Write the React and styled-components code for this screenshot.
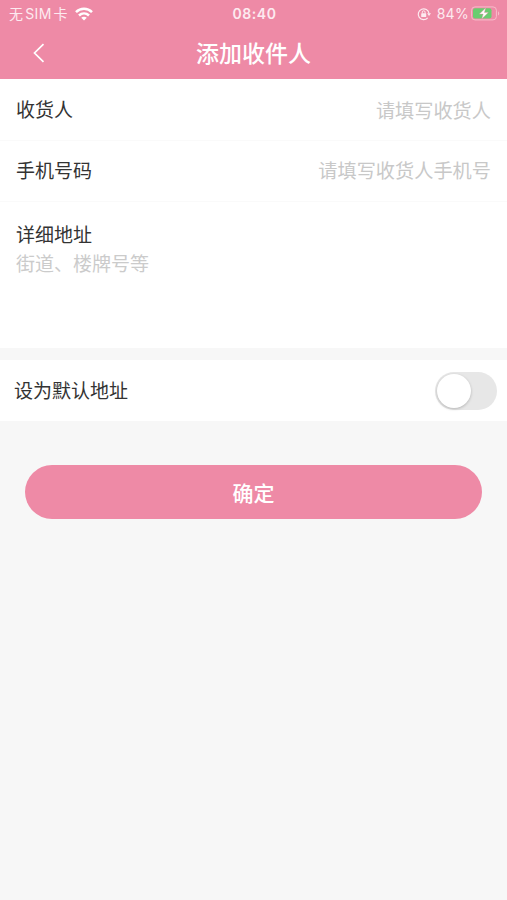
import React, { useState } from 'react'
import styled, { createGlobalStyle } from 'styled-components'

const GlobalStyle = createGlobalStyle`
  * {
    box-sizing: border-box;
  }

  body {
    margin: 0;
    background-color: #f7f7f7;
    color: #333;
    font-family: Inter, 'Noto Sans CJK SC', sans-serif;
  }
`

const Page = styled.div`
  min-height: 900px;
  background-color: #f7f7f7;
`

const Header = styled.header`
  height: 79px;
  color: #fff;
  background-color: #ee8aa6;
`

const StatusBar = styled.div`
  display: grid;
  grid-template-columns: 1fr auto 1fr;
  align-items: center;
  height: 27px;
  padding: 0 7px 0 9px;
  font-size: 14px;
  line-height: 20px;
  color: #fdeaf0;
`

const StatusGroup = styled.div`
  display: flex;
  align-items: center;
  justify-content: ${props => (props.$end ? 'flex-end' : 'flex-start')};
`

const Carrier = styled.span`
  display: flex;
  gap: 2px;
  margin-right: 7px;
  letter-spacing: 0.3px;
`

const Clock = styled.span`
  font-size: 14px;
  font-weight: 600;
  letter-spacing: 0.6px;
`

const Percent = styled.span`
  margin: 0 2px 0 6px;
  font-size: 14px;
  letter-spacing: 0.3px;
`

const NavBar = styled.div`
  display: grid;
  grid-template-columns: 78px 1fr 78px;
  align-items: center;
  height: 52px;
`

const BackButton = styled.button`
  display: flex;
  justify-content: center;
  padding: 0;
  border: 0;
  color: inherit;
  background: none;
`

const Title = styled.h1`
  margin: 0;
  padding-top: 1px;
  font-size: 23px;
  font-weight: 500;
  line-height: 34px;
  text-align: center;
`

const Field = styled.label`
  display: flex;
  align-items: center;
  height: ${props => props.$height}px;
  padding: ${props => props.$offset || 0}px 16px 0;
  border-bottom: 1px solid #fafafa;
  background-color: #fff;
  font-size: 19.2px;
`

const Label = styled.span`
  flex: none;
  font-size: 19px;
  line-height: 29px;
`

const Input = styled.input`
  flex: 1;
  min-width: 0;
  height: 30px;
  padding: 0;
  border: 0;
  outline: 0;
  background: none;
  font: inherit;
  text-align: right;

  &::placeholder {
    color: #c8c8c8;
  }
`

const AddressField = styled.label`
  display: block;
  height: 146px;
  padding: 19px 16px 0;
  background-color: #fff;
`

const TextArea = styled.textarea`
  display: block;
  width: 100%;
  height: 80px;
  padding: 0;
  border: 0;
  outline: 0;
  resize: none;
  background: none;
  font-family: inherit;
  font-size: 19px;
  line-height: 29px;

  &::placeholder {
    color: #cbcbcb;
  }
`

const DefaultRow = styled.div`
  display: flex;
  align-items: center;
  justify-content: space-between;
  height: 61px;
  margin-top: 12px;
  padding: 1px 10px 0 14px;
  background-color: #fff;
`

const Switch = styled.button`
  display: flex;
  align-items: center;
  justify-content: ${props => (props.$on ? 'flex-end' : 'flex-start')};
  width: 62px;
  height: 38px;
  padding: 0 2px;
  border: 0;
  border-radius: 19px;
  background-color: ${props => (props.$on ? '#ee8aa6' : '#e7e7e7')};
`

const Knob = styled.span`
  width: 34px;
  height: 34px;
  border-radius: 50%;
  background-color: #fff;
  box-shadow: 0 1px 3px rgba(0, 0, 0, 0.22);
`

const Submit = styled.button`
  display: block;
  width: 457px;
  height: 54px;
  margin: 44px auto 0;
  padding: 0 0 1px;
  border: 0;
  border-radius: 27px;
  color: #fff;
  background-color: #ee8aa6;
  font-family: inherit;
  font-size: 21px;
  font-weight: 500;
`

const WifiIcon = () => (
  <svg width="18" height="14" viewBox="0 0 18 14" fill="none">
    <g stroke="#fff" strokeWidth="2.5">
      <path d="M1 5.2C5.5 0.7 12.5 0.7 17 5.2" />
      <path d="M4 8.5C6.9 5.7 11.1 5.7 14 8.5" />
    </g>
    <path d="M9 13.5L6.2 10.7C7.8 9.3 10.2 9.3 11.8 10.7Z" fill="#fff" />
  </svg>
)

const RotationLockIcon = () => (
  <svg width="14" height="14" viewBox="0 0 14 14" fill="none">
    <path
      d="M10.7 10.8A5.4 5.4 0 1 1 12 6.5"
      stroke="#fdeaf0"
      strokeWidth="1.2"
    />
    <path d="M10.1 6.3H14L12 9.1Z" fill="#fdeaf0" />
    <rect x="4.2" y="6.3" width="5" height="3.8" rx="0.6" fill="#fdeaf0" />
    <path
      d="M5.3 6.5V5.2A1.4 1.4 0 0 1 8.1 5.2V6.5"
      stroke="#fdeaf0"
      strokeWidth="1"
    />
  </svg>
)

const BatteryIcon = () => (
  <svg width="29" height="15" viewBox="0 0 29 15" fill="none">
    <rect x="0.6" y="0.9" width="24.8" height="13" rx="3.4" stroke="#f7bccb" />
    <path d="M27 5.2C28.7 6 28.7 8.8 27 9.6Z" fill="#f7bccb" />
    <rect x="2" y="2.3" width="18.5" height="10.2" rx="2" fill="#69cd70" />
    <path
      d="M14.6 2L8.4 8.1H12.2L10.8 12.8L17.3 6.6H13.4Z"
      fill="#fff"
      stroke="#ee8aa6"
      strokeWidth="0.4"
    />
  </svg>
)

const BackIcon = () => (
  <svg width="12" height="20" viewBox="0 0 12 20" fill="none">
    <path d="M10.5 1.2L1.5 10L10.5 18.8" stroke="#fff" strokeWidth="1.7" />
  </svg>
)

const App = () => {
  const [isDefault, setDefault] = useState(false)

  return (
    <Page>
      <GlobalStyle />
      <Header>
        <StatusBar>
          <StatusGroup>
            <Carrier>
              <span>无</span>
              <span>SIM</span>
              <span>卡</span>
            </Carrier>
            <WifiIcon />
          </StatusGroup>
          <Clock>08:40</Clock>
          <StatusGroup $end>
            <RotationLockIcon />
            <Percent>84%</Percent>
            <BatteryIcon />
          </StatusGroup>
        </StatusBar>
        <NavBar>
          <BackButton aria-label="返回">
            <BackIcon />
          </BackButton>
          <Title>添加收件人</Title>
        </NavBar>
      </Header>

      <Field $height={62} $offset={2}>
        <Label>收货人</Label>
        <Input placeholder="请填写收货人" />
      </Field>
      <Field $height={61}>
        <Label>手机号码</Label>
        <Input placeholder="请填写收货人手机号" />
      </Field>
      <AddressField>
        <Label>详细地址</Label>
        <TextArea placeholder="街道、楼牌号等" />
      </AddressField>

      <DefaultRow>
        <Label>设为默认地址</Label>
        <Switch
          role="switch"
          aria-checked={isDefault}
          $on={isDefault}
          onClick={() => setDefault(!isDefault)}
        >
          <Knob />
        </Switch>
      </DefaultRow>

      <Submit>确定</Submit>
    </Page>
  )
}

export default App
